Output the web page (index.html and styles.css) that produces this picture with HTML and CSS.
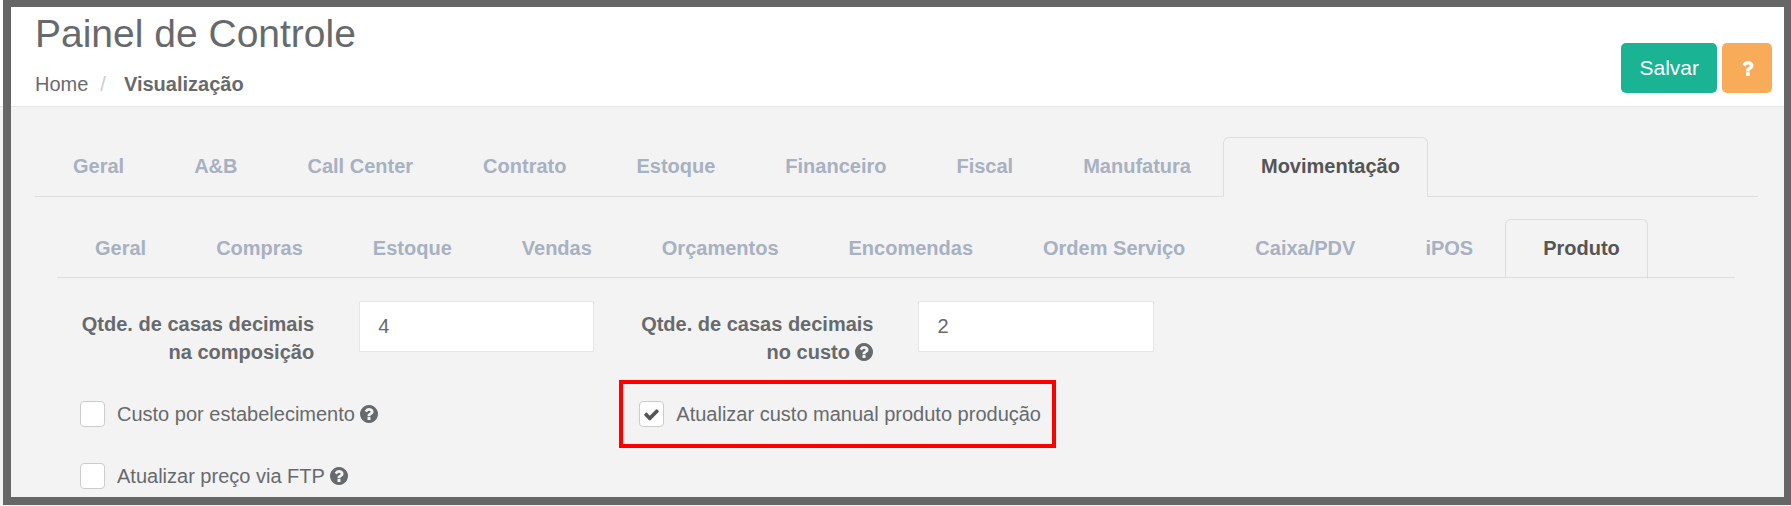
FILE: index.html
```
<!DOCTYPE html>
<html lang="pt-BR">
<head>
    <meta charset="UTF-8">
    <meta name="viewport" content="width=device-width, initial-scale=1.0">
    <title>Painel de Controle</title>
    <link rel="stylesheet" href="styles.css">
</head>
<body>
    <svg class="symbols" aria-hidden="true">
        <symbol id="question-circle" viewBox="128 128 1536 1536">
            <path d="M1024 1376v-192q0-14-9-23t-23-9h-192q-14 0-23 9t-9 23v192q0 14 9 23t23 9h192q14 0 23-9t9-23zm256-672q0-88-55.5-163t-138.5-116-170-41q-243 0-371 213-15 24 8 42l132 100q7 6 19 6 16 0 25-12 53-68 86-92 34-24 86-24 48 0 85.5 26t37.5 59q0 38-20 61t-68 45q-63 28-115.5 86.5t-52.5 125.5v36q0 14 9 23t23 9h192q14 0 23-9t9-23q0-19 21.5-49.5t54.5-49.5q32-18 49-28.5t46-35 44.5-48 28-60.5 12.5-81zm384 192q0 209-103 385.5t-279.5 279.5-385.5 103-385.5-103-279.5-279.5-103-385.5 103-385.5 279.5-279.5 385.5-103 385.5 103 279.5 279.5 103 385.5z"/>
        </symbol>
    </svg>

    <div class="page">
        <header class="page-header">
            <div>
                <h1>Painel de Controle</h1>
                <ol class="breadcrumb">
                    <li><a href="#">Home</a></li>
                    <li class="current">Visualização</li>
                </ol>
            </div>
            <div class="actions">
                <button type="submit" form="configForm" class="btn btn-save">Salvar</button>
                <button type="button" class="btn btn-help" aria-label="Ajuda">
                    <svg viewBox="0 0 1792 1792"><path d="M1088 1256v240q0 16-12 28t-28 12h-240q-16 0-28-12t-12-28v-240q0-16 12-28t28-12h240q16 0 28 12t12 28zm316-600q0 54-15.5 101t-35 76.5-55 59.5-57.5 43.5-61 35.5q-41 23-68.5 65t-27.5 67q0 17-12 32.5t-28 15.5h-240q-15 0-25.5-18.5t-10.5-37.5v-45q0-83 65-156.5t143-108.5q59-27 84-56t25-76q0-42-46.5-74t-107.5-32q-65 0-108 29-35 25-107 115-13 16-31 16-12 0-25-8l-164-125q-13-10-15.5-25t5.5-28q160-266 464-266 80 0 161 31t146 83 106 127.5 41 158.5z"/></svg>
                </button>
            </div>
        </header>

        <main class="content">
            <nav class="tabs">
                <a href="#">Geral</a>
                <a href="#">A&amp;B</a>
                <a href="#">Call Center</a>
                <a href="#">Contrato</a>
                <a href="#">Estoque</a>
                <a href="#">Financeiro</a>
                <a href="#">Fiscal</a>
                <a href="#">Manufatura</a>
                <a href="#" class="active">Movimentação</a>
            </nav>

            <div class="tab-panel">
                <nav class="tabs sub-tabs">
                    <a href="#">Geral</a>
                    <a href="#">Compras</a>
                    <a href="#">Estoque</a>
                    <a href="#">Vendas</a>
                    <a href="#">Orçamentos</a>
                    <a href="#">Encomendas</a>
                    <a href="#">Ordem Serviço</a>
                    <a href="#">Caixa/PDV</a>
                    <a href="#">iPOS</a>
                    <a href="#" class="active">Produto</a>
                </nav>

                <form id="configForm" class="config-form">
                    <div class="form-row">
                        <div class="field">
                            <label for="decComposicao">Qtde. de casas decimais na composição</label>
                            <input type="text" id="decComposicao" name="decComposicao" value="4">
                        </div>
                        <div class="field">
                            <label for="decCusto">Qtde. de casas decimais no custo <svg class="help"><use href="#question-circle"/></svg></label>
                            <input type="text" id="decCusto" name="decCusto" value="2">
                        </div>
                    </div>
                    <div class="form-row">
                        <div class="check-cell">
                            <label class="check">
                                <span class="box"><input type="checkbox" name="custoEstabelecimento"></span>
                                <span>Custo por estabelecimento <svg class="help"><use href="#question-circle"/></svg></span>
                            </label>
                        </div>
                        <div class="check-cell">
                            <label class="check highlight">
                                <span class="box">
                                    <input type="checkbox" name="custoManual" checked>
                                    <svg class="tick" viewBox="0 0 1792 1792"><path d="M1671 566q0 40-28 68l-724 724-136 136q-28 28-68 28t-68-28l-136-136-362-362q-28-28-28-68t28-68l136-136q28-28 68-28t68 28l294 295 656-657q28-28 68-28t68 28l136 136q28 28 28 68z"/></svg>
                                </span>
                                <span>Atualizar custo manual produto produção</span>
                            </label>
                        </div>
                    </div>
                    <div class="form-row">
                        <div class="check-cell">
                            <label class="check">
                                <span class="box"><input type="checkbox" name="precoFtp"></span>
                                <span>Atualizar preço via FTP <svg class="help"><use href="#question-circle"/></svg></span>
                            </label>
                        </div>
                    </div>
                </form>
            </div>
        </main>

        <div class="frame"></div>
    </div>
</body>
</html>
```

FILE: styles.css
```
* {
    box-sizing: border-box;
}

body {
    margin: 0;
    font-family: Arial, "Liberation Sans", sans-serif;
    font-size: 20px;
    line-height: 28px;
    color: #676a6c;
    background-color: #f3f3f3;
}

a {
    color: inherit;
    text-decoration: none;
}

.symbols {
    display: none;
}

.page {
    position: relative;
    min-height: 100vh;
}

/* thick border drawn over the page */
.frame {
    position: absolute;
    inset: 0 0 1px 3px;
    border: 8px solid #666;
    border-width: 7px 7px 8px 8px;
    pointer-events: none;
}

/* header */
.page-header {
    display: flex;
    justify-content: space-between;
    align-items: flex-end;
    padding: 12px 19px 8px 35px;
    background-color: #fff;
    border-bottom: 1px solid #e7e7e7;
}

h1 {
    margin: 0 0 14px;
    font-size: 39px;
    font-weight: normal;
    line-height: 44px;
}

.breadcrumb {
    display: flex;
    margin: 0;
    padding: 0;
    list-style: none;
}

.breadcrumb .current {
    font-weight: bold;
}

.breadcrumb .current::before {
    content: "/";
    padding: 0 18px 0 12px;
    font-weight: normal;
    color: #ccc;
}

.actions {
    display: flex;
    gap: 5px;
    margin-bottom: 5px;
}

.btn {
    height: 50px;
    padding: 0 18px;
    border: none;
    border-radius: 5px;
    font-family: inherit;
    font-size: 21px;
    color: #fff;
    cursor: pointer;
}

.btn-save {
    background-color: #1ab394;
}

.btn-help {
    width: 50px;
    padding: 0;
    background-color: #f8ac59;
}

.btn-help svg {
    display: block;
    width: 21px;
    height: 21px;
    margin: 0 auto;
    fill: #fff;
}

/* tabs */
.content {
    padding: 30px 33px 0 35px;
}

.tabs {
    display: flex;
    border-bottom: 1px solid #ddd;
}

.tabs a {
    margin: 0 4px -1px 0;
    padding: 14px 27px 16px 37px;
    border: 1px solid transparent;
    border-radius: 6px 6px 0 0;
    font-weight: bold;
    color: #a7b1c2;
}

.tabs .active {
    color: #555;
    border-color: #ddd;
    border-bottom-color: #f3f3f3;
}

.sub-tabs a {
    margin-bottom: -2px;
}

.sub-tabs .active {
    border-bottom-color: transparent;
}

.tab-panel {
    padding: 22px 23px 0 22px;
}

/* form */
.config-form {
    display: grid;
    gap: 34px;
    padding: 23px 0 16px;
}

.form-row {
    display: grid;
    grid-template-columns: repeat(3, 1fr);
}

.field {
    display: grid;
    grid-template-columns: 1fr 1fr;
    gap: 45px;
    align-items: start;
    padding: 0 22px;
}

.field label {
    padding-top: 9px;
    font-weight: bold;
    text-align: right;
}

.field input {
    width: 100%;
    height: 51px;
    padding: 0 18px;
    border: 1px solid #e5e6e7;
    border-radius: 1px;
    font-family: inherit;
    font-size: 20px;
    color: inherit;
    background-color: #fff;
}

.check-cell {
    padding-left: 23px;
}

.check {
    display: flex;
    align-items: center;
    gap: 12px;
    width: fit-content;
}

.box {
    display: grid;
    place-items: center;
}

.box > * {
    grid-area: 1 / 1;
}

.box input {
    appearance: none;
    width: 25px;
    height: 26px;
    margin: 0;
    border: 1px solid #ccc;
    border-radius: 4px;
    background-color: #fff;
}

.tick {
    width: 17px;
    height: 17px;
    fill: #555;
    pointer-events: none;
}

.help {
    width: 18px;
    height: 18px;
    fill: currentColor;
    vertical-align: -2px;
}

.highlight {
    position: relative;
}

.highlight::after {
    content: "";
    position: absolute;
    inset: -20px -15px -20px -20px;
    border: 4px solid #f00;
}
```
